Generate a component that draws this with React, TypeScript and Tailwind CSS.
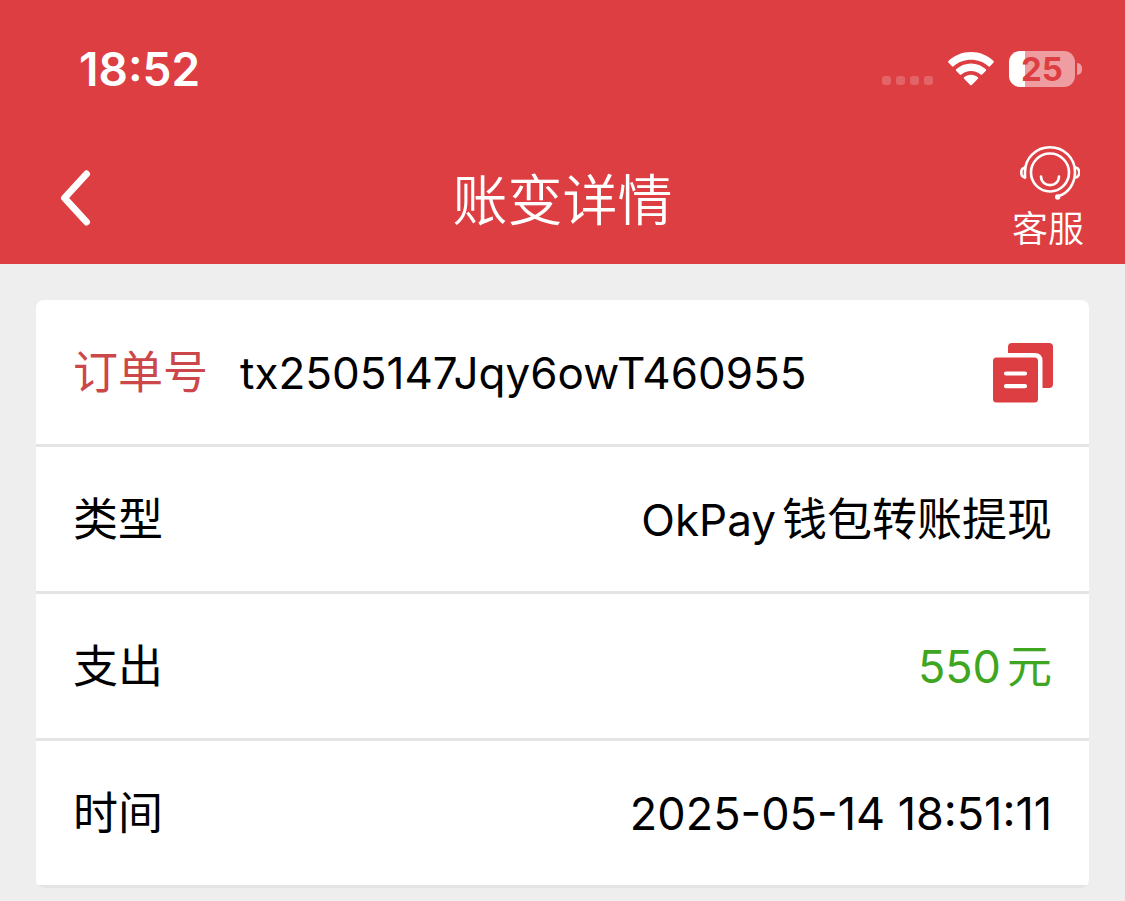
import type { ReactNode } from "react";

interface DetailRowProps {
    label: string;
    children: ReactNode;
}

function StatusBar() {
    return (
        <div className="flex h-[132px] items-start justify-between pl-[79px] pr-[43px] pt-[42px] text-white">
            <span className="text-[46px] font-semibold leading-[54px]">18:52</span>

            <div className="flex h-[54px] items-center">
                {/* Signal dots */}
                <div className="mr-[14px] flex gap-[5px] pt-[23px]">
                    <span className="h-[9px] w-[9px] rounded-[3px] bg-white/20" />
                    <span className="h-[9px] w-[9px] rounded-[3px] bg-white/20" />
                    <span className="h-[9px] w-[9px] rounded-[3px] bg-white/20" />
                    <span className="h-[9px] w-[9px] rounded-[3px] bg-white/20" />
                </div>

                {/* Wifi */}
                <svg className="mr-[14px] h-[34px] w-[48px]" viewBox="0 0 48 34" fill="#fff" aria-hidden="true">
                    <path d="M24 0C15.200 0 7.200 3.400 1.400 9Q.8 9.700 1.400 10.400L5 14.300Q5.800 15 6.600 14.300C11.300 10 17.300 7.700 24 7.700S36.700 10 41.400 14.300Q42.200 15 43 14.300L46.600 10.400Q47.200 9.700 46.600 9C40.800 3.400 32.800 0 24 0Z" />
                    <path d="M24 11.400C18.200 11.400 13 13.600 9.100 17.300Q8.500 18 9.100 18.700L12.800 22.500Q13.600 23.200 14.400 22.500C17 20.200 20.200 18.900 24 18.900S31 20.200 33.600 22.500Q34.400 23.200 35.200 22.500L38.900 18.700Q39.500 18 38.900 17.300C35 13.600 29.800 11.400 24 11.400Z" />
                    <path d="M24 22.800C21.300 22.800 18.900 23.700 17.100 25.300Q16.400 26 17.100 26.700L23.200 33Q24 33.700 24.800 33L30.900 26.700Q31.600 26 30.900 25.300C29.100 23.700 26.700 22.800 24 22.800Z" />
                </svg>

                {/* Battery */}
                <div className="flex items-center gap-[2px]">
                    <div className="flex h-9 w-[66px] items-center justify-center rounded-[11px] bg-linear-to-r from-white from-25% to-[#ee9da0] to-25%">
                        <span className="text-[33px] font-bold leading-9 text-[#dd3e42]">25</span>
                    </div>
                    <span className="h-3 w-[5px] rounded-r-full bg-[#ee9da0]" />
                </div>
            </div>
        </div>
    );
}

function NavBar() {
    return (
        <div className="grid h-[132px] grid-cols-[1fr_auto_1fr] items-center px-[41px] text-white">
            <button type="button" aria-label="返回" className="justify-self-start px-[19px]">
                <svg className="h-[58px] w-[32px]" viewBox="0 0 32 58" fill="none" aria-hidden="true">
                    <path d="M26.500 5L4.500 29L26.500 53" stroke="#fff" strokeWidth="7" strokeLinecap="round" strokeLinejoin="round" />
                </svg>
            </button>

            <h1 className="pt-1 text-[55px] font-[350] leading-[72px]">账变详情</h1>

            <button type="button" className="flex flex-col items-center justify-self-end pt-[2px]">
                <svg className="h-[58px] w-[64px]" viewBox="-2 0 64 58" fill="none" stroke="#fff" strokeWidth="2.600" strokeLinecap="round" aria-hidden="true">
                    <circle cx="32" cy="29.500" r="19" />
                    <path d="M7 34.500V29C7 15 18 4.300 32 4.300S57 15 57 29C57 40.500 50.500 50 40.500 53" />
                    <path d="M7 24.500C2 25.500 2 33.500 7 34.500M57.500 24.500C62.500 25.500 62.500 33.500 57.500 34.500" />
                    <path d="M23 33.500C23.500 45 40.500 45 41 33.500" />
                    <circle cx="39.700" cy="54" r="2.700" fill="#fff" stroke="none" />
                </svg>
                <span className="mt-[2px] text-[36px] font-[350] leading-[52px]">客服</span>
            </button>
        </div>
    );
}

function CopyIcon() {
    return (
        <svg className="h-[62px] w-[62px]" viewBox="0 0 62 62" fill="#dd3e42" aria-hidden="true">
            <path d="M16 11V5Q16 1 20 1H57Q61 1 61 5V42Q61 46 57 46H50.500V19Q50.500 11 42.500 11Z" />
            <rect x="1" y="15.500" width="45" height="45" rx="3.500" />
            <path d="M14 31.500H33M14 44.200H33" stroke="#fff" strokeWidth="4.200" strokeLinecap="round" />
        </svg>
    );
}

function DetailRow({ label, children }: DetailRowProps) {
    return (
        <div className="flex h-[147px] items-center justify-between border-b-[3px] border-[#e4e4e4] px-[37px] pt-[2px]">
            <dt>{label}</dt>
            <dd className="flex items-center gap-[6px]">{children}</dd>
        </div>
    );
}

export default function App() {
    return (
        <div className="min-h-screen bg-[#eee] font-['Inter','Noto_Sans_CJK_SC',sans-serif]">
            <header className="bg-[#dd3e42]">
                <StatusBar />
                <NavBar />
            </header>

            <main className="px-9 pt-9">
                <dl className="overflow-hidden rounded-lg bg-white text-[45px] leading-[66px] text-black">
                    <div className="flex h-[147px] items-center border-b-[3px] border-[#e4e4e4] pl-[37px] pr-[35px] pt-[2px]">
                        <dt className="mr-8 text-[#cb474a]">订单号</dt>
                        <dd className="flex flex-1 items-center justify-between">
                            <span className="text-[44px]">tx2505147Jqy6owT460955</span>
                            <button type="button" aria-label="复制">
                                <CopyIcon />
                            </button>
                        </dd>
                    </div>
                    <DetailRow label="类型">
                        <span className="text-[44px]">OkPay</span>
                        <span>钱包转账提现</span>
                    </DetailRow>
                    <DetailRow label="支出">
                        <span className="text-[#3fa621]">550</span>
                        <span className="text-[#3fa621]">元</span>
                    </DetailRow>
                    <DetailRow label="时间">
                        <span>2025-05-14 18:51:11</span>
                    </DetailRow>
                </dl>
            </main>
        </div>
    );
}
